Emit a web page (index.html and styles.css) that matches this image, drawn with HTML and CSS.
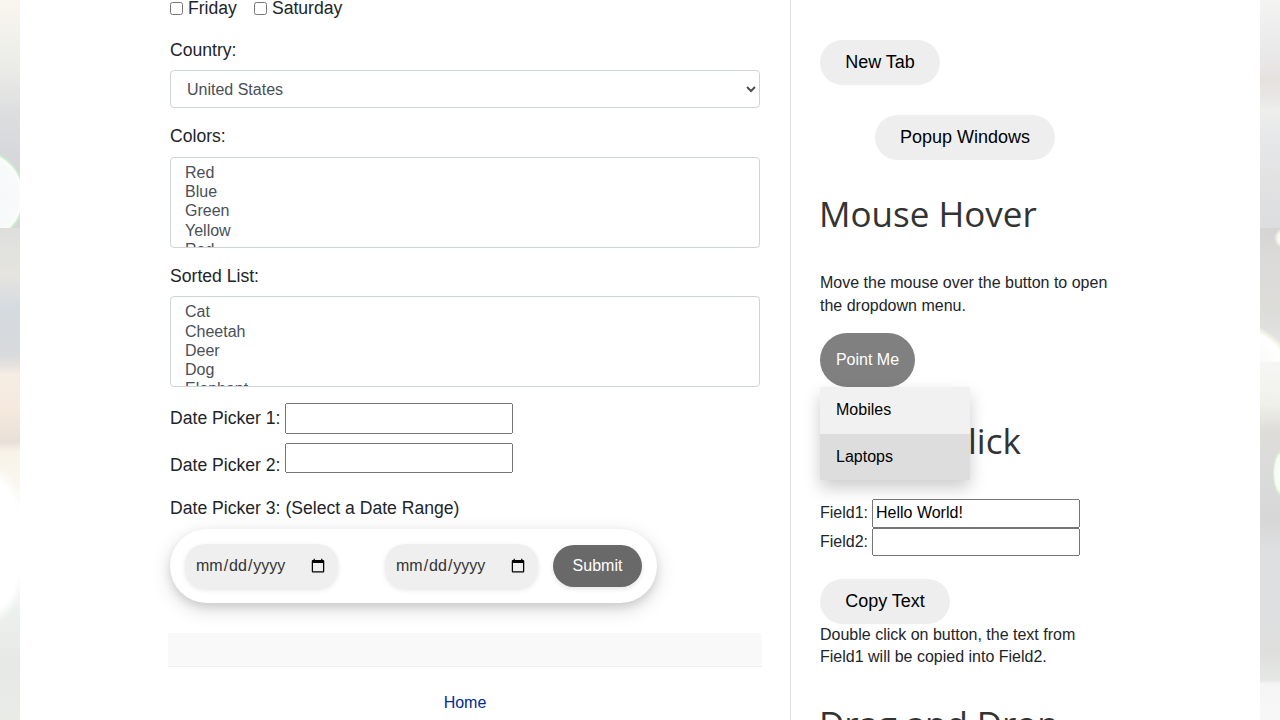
FILE: index.html
```html
<!DOCTYPE html>
<html lang="en">
<head>
<meta charset="utf-8">
<title>Automation Testing Practice</title>
<link rel="stylesheet" href="styles.css">
</head>
<body>
<div class="page">
  <div class="backdrop backdrop-left"></div>
  <main class="content">
    <section class="main-column">
      <div class="days">
        <label class="day"><input type="checkbox">Friday</label>
        <label class="day"><input type="checkbox">Saturday</label>
      </div>
      <div class="group country">
        <label class="caption">Country:</label>
        <select class="control"><option>United States</option></select>
      </div>
      <div class="group colors">
        <label class="caption">Colors:</label>
        <div class="control list"><span>Red</span><span>Blue</span><span>Green</span><span>Yellow</span><span>Red</span></div>
      </div>
      <div class="group sorted">
        <label class="caption">Sorted List:</label>
        <div class="control list"><span>Cat</span><span>Cheetah</span><span>Deer</span><span>Dog</span><span>Elephant</span></div>
      </div>
      <div class="date-row first"><label class="caption">Date Picker 1:</label><input type="text"></div>
      <div class="date-row second"><label class="caption">Date Picker 2:</label><input type="text"></div>
      <label class="caption range-caption">Date Picker 3: (Select a Date Range)</label>
      <div class="range">
        <input class="date" type="date">
        <input class="date" type="date">
        <button class="submit">Submit</button>
      </div>
      <div class="footer-bar"></div>
      <a class="home">Home</a>
    </section>
    <aside class="side-column">
      <button class="pill new-tab">New Tab</button>
      <button class="pill popup">Popup Windows</button>
      <h2 class="heading hover-heading">Mouse Hover</h2>
      <p class="text">Move the mouse over the button to open the dropdown menu.</p>
      <div class="dropdown">
        <button class="point">Point Me</button>
        <div class="menu"><a>Mobiles</a><a class="active">Laptops</a></div>
      </div>
      <h2 class="heading click-heading">Double Click</h2>
      <div class="field"><label>Field1:</label><input type="text" value="Hello World!"></div>
      <div class="field field-two"><label>Field2:</label><input type="text"></div>
      <button class="pill copy">Copy Text</button>
      <p class="text copy-text">Double click on button, the text from Field1 will be copied into Field2.</p>
      <h2 class="heading drag-heading">Drag and Drop</h2>
    </aside>
  </main>
  <div class="backdrop backdrop-right"></div>
</div>
</body>
</html>
```
FILE: styles.css
```css
* { box-sizing: border-box; }
body { margin: 0; background: #fff; color: #212529; font: 16px/22.4px "Liberation Sans", Arial, sans-serif; }
input, select, button { font-family: inherit; margin: 0; }
.page { display: flex; width: 1280px; height: 720px; overflow: hidden; }
.backdrop { flex: 0 0 20px; }
.backdrop-left {
  background:
    radial-gradient(circle at -22px 196px, #f2f8fa 0, #f8fafa 40px, #fbfcfb 44px, #c9edcb 46px, transparent 48px) 0 0 / 20px 228px no-repeat,
    radial-gradient(ellipse 30px 78px at -4px 545px, #fff 0, #fff 80%, transparent 100%),
    linear-gradient(#faf5ef 0, #f3f2ed 30px, #e9eae6 75px, #dcdddf 115px, #d5d6d9 170px, #d5d8d7 228px, #dedfdd 228px, #e5e4df 275px, #d5dae0 310px, #d8dadc 355px, #e6e3dd 366px, #f6ede4 374px, #f5e9dd 410px, #e8e0d8 442px, #f8f3e8 452px, #faf7f1 485px, #fff 515px, #fefefe 570px, #edf1ed 610px, #e6e9e5 660px, #e9ebe7 720px);
}
.backdrop-right {
  background:
    radial-gradient(circle at 25px 238px, #fff 0, #f7faef 7px, transparent 11px),
    radial-gradient(ellipse 10px 25px at 22px 473px, #fff 0, #f4fbf1 75%, #d8ead2 86%, transparent 100%),
    radial-gradient(circle at -25px 385px, #f8f8f6 0, #f8f8f6 25px, #fff 56px, #f5f4e7 59px, transparent 63px) 0 0 / 20px 362px no-repeat,
    linear-gradient(#f4f4f2 0, #eeeeef 25px, #e9e8e9 55px, #e6e1df 80px, #e8e7e5 98px, #eeeeeb 110px, #e7e8ea 135px, #e2e2e3 180px, #dcdddf 228px, #d6d4d3 228px, #dcdad8 255px, #dcdcd9 310px, #e2e3e0 340px, #f6f6f4 362px, #f0f0eb 405px, #deddd9 430px, #dadadb 480px, #d7d7d7 520px, #dedfe1 550px, #dedfe1 610px, #dedfdd 650px, #e5e7e4 680px, #f5f5f5 684px, #f7f7f7 720px);
}
.content { display: flex; width: 1240px; background: #fff; }
.main-column { width: 771px; padding: 0 30px 0 150px; border-right: 1px solid #ddd; }
.side-column { width: 329px; padding: 40px 0 0 29px; }
.days { display: flex; gap: 17px; height: 37px; line-height: 16px; font-size: 17.6px; }
.day { display: flex; height: 16px; white-space: nowrap; }
.day input { width: 13px; height: 13px; margin: 2px 5px 0 0; }
.caption { display: block; font-size: 17.6px; line-height: 26px; white-space: nowrap; }
.country { height: 86px; }
.colors { height: 140px; }
.sorted { height: 140px; }
.control { display: block; width: 590px; height: 38px; margin-top: 7px; padding: 6px 12px; border: 1px solid #ced4da; border-radius: 4px; background: #fff; color: #495057; font-size: 16px; line-height: 24px; }
.list { height: 91px; padding: 5.4px 14px; overflow: hidden; line-height: 19.2px; }
.colors .list { margin-top: 8px; padding-top: 5px; }
.list span { display: block; height: 19.2px; }
.date-row { display: flex; }
.date-row .caption { width: 115px; }
.date-row input { width: 228px; height: 31px; padding: 1px 2px; }
.first { height: 40px; }
.first .caption { padding-top: 2px; }
.second .caption { padding-top: 9px; }
.second input { height: 30px; }
.second { height: 52px; }
.range { display: flex; align-items: center; width: 487px; height: 74px; margin-top: 8px; padding: 0 15px; border-radius: 37px; background: #fff; box-shadow: 0 4px 8px rgba(0,0,0,.1), 0 6px 20px rgba(0,0,0,.15); }
.date { width: 153px; height: 44px; margin-right: 47px; padding: 10px; border: 0; border-radius: 20px; background: #efefef; color: #333; font-size: 16px; box-shadow: 0 2px 5px rgba(0,0,0,.1); }
.date + .date { margin-right: 15px; }
.submit { width: 89px; height: 42px; padding: 0; border: 0; border-radius: 21px; background: #696969; color: #fff; font-size: 16px; box-shadow: 0 2px 5px rgba(0,0,0,.1); }
.footer-bar { width: 594px; height: 34px; margin: 30px -2px 0; background: #f9f9f9; border-bottom: 1px solid #eee; }
.home { display: block; margin-top: 25px; color: #0028a0; text-align: center; }
.pill { display: block; height: 45px; padding: 0; border: 0; border-radius: 23px; background: #eee; color: #000; font-size: 18px; }
.new-tab { width: 120px; }
.popup { width: 180px; margin: 30px 0 0 55px; }
.heading { margin: 0 0 0 -1px; height: 44px; color: #333; font: 400 35px/44px "Open Sans", sans-serif; white-space: nowrap; }
.hover-heading { margin-top: 32px; }
.text { margin: 0; width: 300px; }
.hover-heading + .text { margin-top: 35px; line-height: 23px; }
.dropdown { position: relative; margin-top: 16px; height: 54px; }
.point { display: block; width: 95px; height: 54px; padding: 0; border: 0; border-radius: 27px; background: #808080; color: #fff; font-size: 16px; }
.menu { position: absolute; z-index: 1; top: 54px; left: 0; width: 150px; background: #f1f1f1; box-shadow: 0 8px 16px rgba(0,0,0,.2); }
.menu a { display: block; height: 47px; padding: 12px 16px; color: #000; }
.menu .active { height: 46px; background: #ddd; }
.click-heading { margin-top: 32px; }
.field { display: flex; margin-top: 36px; line-height: 28px; }
.field label { width: 52px; }
.field input { width: 208px; height: 29px; padding: 0 2px 2px; font-size: 16px; }
.field-two { margin-top: 0; }
.field-two input { height: 28px; }
.copy { width: 130px; margin-top: 23px; }
.drag-heading { margin-top: 33px; letter-spacing: -0.1px; }
```
